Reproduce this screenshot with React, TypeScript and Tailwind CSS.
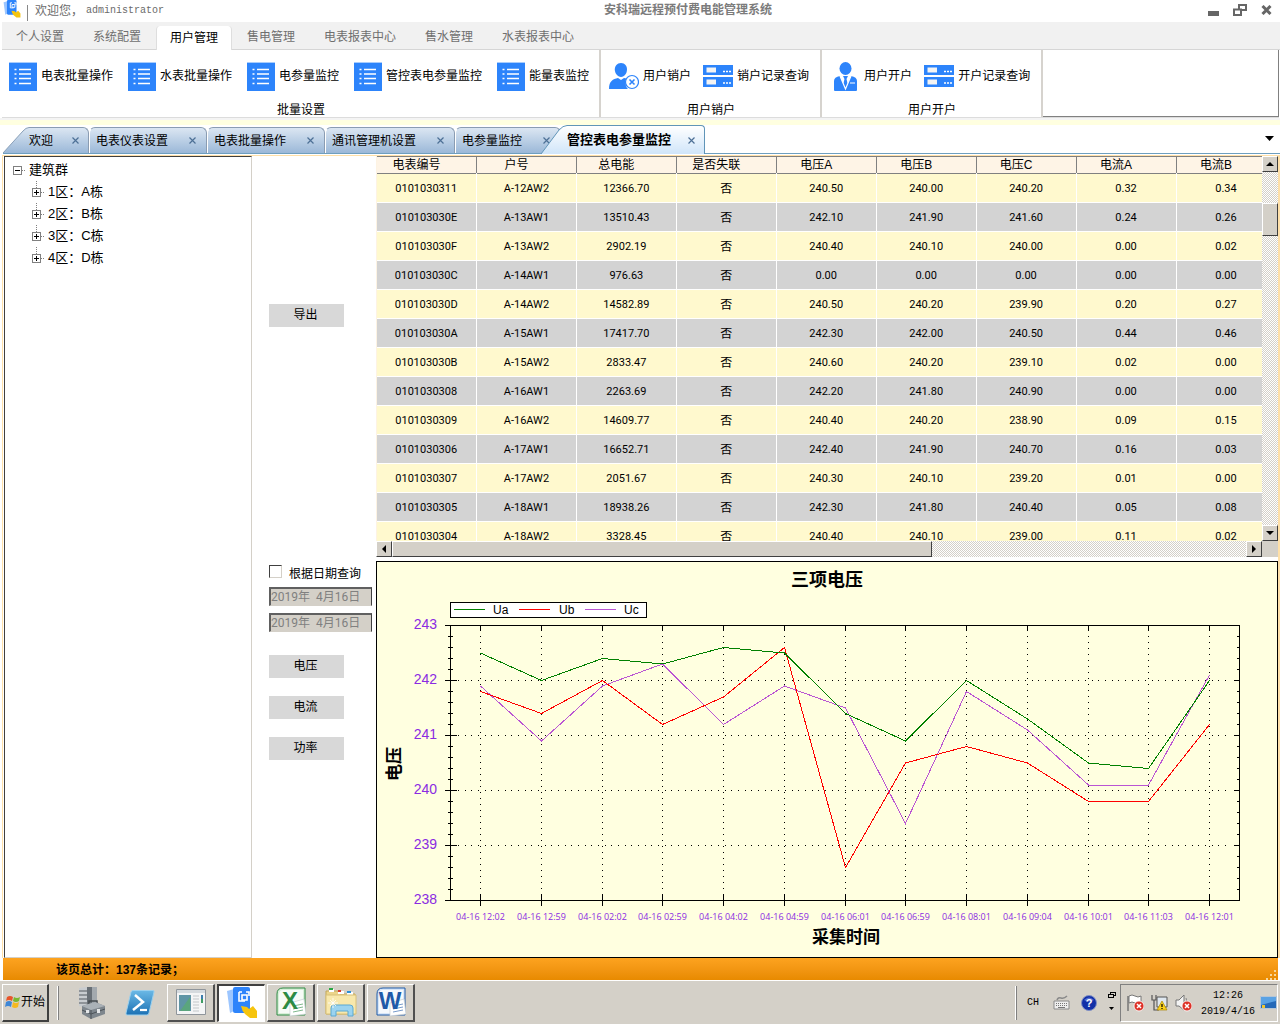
import React from 'react'

const menuTabs = ['个人设置', '系统配置', '用户管理', '售电管理', '电表报表中心', '售水管理', '水表报表中心']
const batchItems = ['电表批量操作', '水表批量操作', '电参量监控', '管控表电参量监控', '能量表监控']
const columns = ['电表编号', '户号', '总电能', '是否失联', '电压A', '电压B', '电压C', '电流A', '电流B']
const rows = [
  ['0101030311', 'A-12AW2', '12366.70', '否', '240.50', '240.00', '240.20', '0.32', '0.34'],
  ['010103030E', 'A-13AW1', '13510.43', '否', '242.10', '241.90', '241.60', '0.24', '0.26'],
  ['010103030F', 'A-13AW2', '2902.19', '否', '240.40', '240.10', '240.00', '0.00', '0.02'],
  ['010103030C', 'A-14AW1', '976.63', '否', '0.00', '0.00', '0.00', '0.00', '0.00'],
  ['010103030D', 'A-14AW2', '14582.89', '否', '240.50', '240.20', '239.90', '0.20', '0.27'],
  ['010103030A', 'A-15AW1', '17417.70', '否', '242.30', '242.00', '240.50', '0.44', '0.46'],
  ['010103030B', 'A-15AW2', '2833.47', '否', '240.60', '240.20', '239.10', '0.02', '0.00'],
  ['0101030308', 'A-16AW1', '2263.69', '否', '242.20', '241.80', '240.90', '0.00', '0.00'],
  ['0101030309', 'A-16AW2', '14609.77', '否', '240.40', '240.20', '238.90', '0.09', '0.15'],
  ['0101030306', 'A-17AW1', '16652.71', '否', '242.40', '241.90', '240.70', '0.16', '0.03'],
  ['0101030307', 'A-17AW2', '2051.67', '否', '240.30', '240.10', '239.20', '0.01', '0.00'],
  ['0101030305', 'A-18AW1', '18938.26', '否', '242.30', '241.80', '240.40', '0.05', '0.08'],
  ['0101030304', 'A-18AW2', '3328.45', '否', '240.40', '240.10', '239.00', '0.11', '0.02'],
]

function AppLogo({ className }: { className?: string }) {
  return (
    <svg viewBox="0 0 32 32" className={className} aria-hidden="true">
      <path d="M1 4l7-2v22l-4 2z" fill="#9cc6ff" />
      <path d="M7 2q0-2 2-2h13q2 0 2 2v22q0 2-2 2H9q-2 0-2-2z" fill="#2d84fb" />
      <path d="M13 5h3M20 5h3v4M13 5v9h6" fill="none" stroke="#fff" strokeWidth="1.600" />
      <path d="M16 8h5v5h-5z" fill="none" stroke="#fff" strokeWidth="1.600" />
      <path d="M15 19l6 1 2 2 4-3 4 5v7h-7l-5-4q-3-3-4-8z" fill="#f6c40e" />
    </svg>
  )
}

function ListIcon() {
  return (
    <svg width="28" height="29" viewBox="0 0 28 29" className="shrink-0" aria-hidden="true">
      <rect width="28" height="29" fill="#2d84fb" />
      <path d="M0 .5h28" stroke="#a9cdfd" />
      <path d="M10 7.500h12M10 12h12M10 16.500h12M10 21.500h12" stroke="#fff" strokeWidth="1.400" />
      <path d="M5.500 7.500h2M5.500 12h2M5.500 16.500h2M5.500 21.500h2" stroke="#fff" strokeWidth="1.600" />
    </svg>
  )
}

function UserRemoveIcon() {
  return (
    <svg width="30" height="28" viewBox="0 0 30 28" className="shrink-0" aria-hidden="true">
      <path d="M12 1c4 0 6 3 6 6.500S15.500 15 12 15 5.800 11 5.800 7.500 8 1 12 1z" fill="#2d84fb" />
      <path d="M0 27c0-8 4-10 9-11l3 2 3-2q3 0 4 2c-3 3-3 6 0 9z" fill="#2d84fb" />
      <circle cx="23" cy="20" r="6.500" fill="#fff" stroke="#2d84fb" strokeWidth="1.200" />
      <path d="M20.500 17.500l5 5M25.500 17.500l-5 5" stroke="#2d84fb" strokeWidth="1.600" />
    </svg>
  )
}

function UserSuitIcon() {
  return (
    <svg width="30" height="29" viewBox="0 0 30 29" className="shrink-0" aria-hidden="true">
      <ellipse cx="15.500" cy="6.500" rx="6" ry="6.500" fill="#2d84fb" />
      <path d="M4 28V19q0-4 6-5l5.500 12L21 14q6 1 6 5v9q0 1-1 1H5q-1 0-1-1z" fill="#2d84fb" />
      <path d="M13 14h5l-1.500 3 1.500 6-2.500 4-2.500-4 1.500-6z" fill="#2d84fb" />
      <path d="M10 14l5.500 13L21 14" fill="none" stroke="#fff" strokeWidth="1.200" />
      <path d="M20 21h5" stroke="#fff" />
    </svg>
  )
}

function ServerIcon() {
  return (
    <svg width="30" height="22" viewBox="0 0 30 22" className="shrink-0" aria-hidden="true">
      <path d="M0 0h30v10H0zM0 12h30v10H0z" fill="#2d84fb" />
      <path d="M3.500 2.500h9.500v5H3.500zM3.500 14.500h9.500v5H3.500z" fill="#f4f4f4" />
      <path d="M20 6.500h2M23 6.500h2M26 6.500h2M20 18h2M23 18h2M26 18h2" stroke="#fff" strokeWidth="1.500" />
    </svg>
  )
}

function RibbonButton({ icon, label }: { icon: React.ReactNode; label: string }) {
  return (
    <button className="flex h-8 items-center gap-1 whitespace-nowrap text-black">
      {icon}
      <span>{label}</span>
    </button>
  )
}

function RibbonGroup({ title, wide, children }: { title: string; wide?: boolean; children: React.ReactNode }) {
  return (
    <section
      className={
        'flex shrink-0 flex-col justify-between border-r-2 border-[#d6d3ce] pt-[10px] ' +
        (wide ? 'pr-2.5 pl-[7px]' : 'pr-[11px] pl-2')
      }
    >
      <div className={'flex ' + (wide ? 'gap-[15px]' : 'gap-3')}>{children}</div>
      <h2 className="pl-1 text-center leading-[14px]">{title}</h2>
    </section>
  )
}

function DocTab({ label, first }: { label: string; first?: boolean }) {
  return (
    <div className="flex h-[26px] shrink-0">
      {first && (
        <svg width="26" height="26" viewBox="0 0 26 26" aria-hidden="true">
          <defs>
            <linearGradient id="slope" x1="0" y1="0" x2="0" y2="1">
              <stop offset="0" stopColor="#dbe6f2" />
              <stop offset="1" stopColor="#9bb8d8" />
            </linearGradient>
          </defs>
          <path d="M0 26L20 4Q23 .5 26 .5V26z" fill="url(#slope)" />
          <path d="M0 26L20 4Q23 .5 26 .5" fill="none" stroke="#8aa0b8" />
        </svg>
      )}
      <div
        className={
          'flex items-center border-t border-r border-[#8a9cb2] bg-gradient-to-b from-[#dbe6f2] to-[#9bb8d8] ' +
          (first ? 'gap-[18px] rounded-tr-md pr-2' : 'gap-5 rounded-t-md border-l border-l-white pr-[9px] pl-1.5')
        }
      >
        <button className="whitespace-nowrap">{label}</button>
        <CloseTab label={label} />
      </div>
    </div>
  )
}

function CloseTab({ label }: { label: string }) {
  return (
    <button aria-label={'关闭 ' + label}>
      <svg width="9" height="9" viewBox="0 0 9 9" aria-hidden="true">
        <path d="M1.500 1.500l6 6M7.500 1.500l-6 6" stroke="#4d7096" strokeWidth="1.200" />
      </svg>
    </button>
  )
}

function TreeToggle({ open }: { open?: boolean }) {
  return (
    <button aria-label={open ? '折叠' : '展开'} className="flex size-[9px] shrink-0 bg-white">
      <svg width="9" height="9" viewBox="0 0 9 9" shapeRendering="crispEdges" aria-hidden="true">
        <path d="M.5.5h8v8h-8z" fill="none" stroke="#808080" />
        <path d={open ? 'M2 4.500h5' : 'M2 4.500h5M4.500 2v5'} stroke="#000" />
      </svg>
    </button>
  )
}

const raised = 'border border-t-white border-l-white border-r-[#404040] border-b-[#404040] bg-[#d4d0c8]'
const track =
  'bg-[repeating-conic-gradient(#d4d0c8_0_25%,#ffffff_0_50%)] bg-[length:2px_2px]'

function Arrow({ d, label }: { d: string; label: string }) {
  return (
    <button aria-label={label} className={'flex size-4 shrink-0 items-center justify-center ' + raised}>
      <svg width="8" height="8" viewBox="0 0 8 8" aria-hidden="true">
        <path d={d} />
      </svg>
    </button>
  )
}

function MeterTable() {
  return (
    <div className="flex min-h-0 grow-[401] basis-0 flex-col">
      <div className="flex min-h-0 flex-1">
        <div className="min-w-0 flex-1 overflow-hidden border-l border-[#fdf3e3]">
          <table className="w-full min-w-[900px] table-fixed border-collapse">
            <thead>
              <tr className="h-[17px] border-y border-[#808080] bg-[#fef4e6]">
                {columns.map((c) => (
                  <th key={c} className="p-0 font-normal leading-[15px]">
                    <div className="border-r border-[#808080] pt-px pr-5">{c}</div>
                  </th>
                ))}
              </tr>
            </thead>
            <tbody className="font-['Roboto','Noto_Sans_CJK_SC',sans-serif] text-[11px]">
              {rows.map((r) => (
                <tr key={r[0]} className="h-[29px] odd:bg-[#fff9ce] even:bg-[#d3d3d3]">
                  {r.map((v, i) => (
                    <td
                      key={i}
                      className={'border-r border-b border-white p-0 pt-0.5 pr-px text-center leading-4 ' + (i === 3 ? 'text-[12px]' : '')}
                    >
                      {v}
                    </td>
                  ))}
                </tr>
              ))}
            </tbody>
          </table>
        </div>
        <div className={'flex w-4 shrink-0 flex-col ' + track}>
          <Arrow d="M0 6h8L4 2z" label="向上滚动" />
          <div className={'mt-[31px] h-[33px] ' + raised} />
          <div className="flex-1" />
          <Arrow d="M0 2h8L4 6z" label="向下滚动" />
        </div>
      </div>
      <div className="flex h-4 shrink-0 bg-[#d4d0c8]">
        <div className={'flex flex-1 ' + track}>
          <Arrow d="M6 0v8L2 4z" label="向左滚动" />
          <div className={'w-[61%] ' + raised} />
          <div className="flex-1" />
          <Arrow d="M2 0v8L6 4z" label="向右滚动" />
        </div>
        <div className="w-4" />
      </div>
    </div>
  )
}

const times = [
  '12:02', '12:59', '02:02', '02:59', '04:02', '04:59', '06:01',
  '06:59', '08:01', '09:04', '10:01', '11:03', '12:01',
]
const series = [
  { name: 'Uc', color: '#ba55d3', values: [241.9, 240.9, 241.9, 242.3, 241.2, 241.9, 241.5, 239.4, 241.8, 241.1, 240.1, 240.1, 242.1] },
  { name: 'Ub', color: '#ff0000', values: [241.8, 241.4, 242, 241.2, 241.7, 242.6, 238.6, 240.5, 240.8, 240.5, 239.8, 239.8, 241.2] },
  { name: 'Ua', color: '#008000', values: [242.5, 242, 242.4, 242.3, 242.6, 242.5, 241.4, 240.9, 242, 241.3, 240.5, 240.4, 242] },
]
const px = (i: number) => Math.round(480 + i * 60.75) + 0.5
const py = (v: number) => 900.5 - (v - 238) * 55

function VoltageChart() {
  const minor = Array.from({ length: 24 }, (_, i) => 900.5 - (i + 1) * 11)
  return (
    <figure className="flex min-h-0 grow-[395] basis-0 border border-black bg-[#ffffe0]">
      <svg viewBox="377 562 900 395" className="h-full w-full font-['Liberation_Sans','Noto_Sans_CJK_SC',sans-serif]" role="img" aria-label="三项电压">
        <text x="827" y="586" textAnchor="middle" fontSize="18" fontWeight="bold">三项电压</text>
        <g shapeRendering="crispEdges" fill="none" stroke="#000">
          <path d="M450.5 602.5h196v15h-196z" fill="#fff" />
          <path d="M454 609.5h31" stroke="#008000" />
          <path d="M519 609.5h31" stroke="#ff0000" />
          <path d="M585 609.5h31" stroke="#ba55d3" />
          <path d="M450.5 625.5h789v275h-789z" />
          {[239, 240, 241, 242].map((v) => (
            <path key={v} d={`M458 ${py(v)}H1232`} strokeDasharray="1 5.670" />
          ))}
          {times.map((_, i) => (
            <g key={i}>
              <path d={`M${px(i)} 636V895`} strokeDasharray="1 5" />
              <path d={`M${px(i)} 625v6M${px(i)} 894v12`} />
            </g>
          ))}
          {[238, 239, 240, 241, 242, 243].map((v) => (
            <path key={v} d={`M445 ${py(v)}h12M1234 ${py(v)}h6`} />
          ))}
          {minor.map((y) => (
            <path key={y} d={`M448 ${y}h5M1237 ${y}h3`} />
          ))}
          {series.map((s) => (
            <polyline key={s.name} stroke={s.color} points={s.values.map((v, i) => `${px(i)},${py(v)}`).join(' ')} />
          ))}
        </g>
        <g fontSize="12">
          <text x="493" y="614">Ua</text>
          <text x="559" y="614">Ub</text>
          <text x="624" y="614">Uc</text>
        </g>
        <g fontSize="14" fill="#8a2be2" textAnchor="end">
          {[238, 239, 240, 241, 242, 243].map((v) => (
            <text key={v} x="437" y={Math.round(py(v)) + 3}>{v}</text>
          ))}
        </g>
        <g fontSize="9" fill="#8a2be2" textAnchor="middle" className="font-['Open_Sans',sans-serif]">
          {times.map((t, i) => (
            <text key={i} x={px(i)} y="920">{'04-16 ' + t}</text>
          ))}
        </g>
        <text x="846" y="943" textAnchor="middle" fontSize="17" fontWeight="bold">采集时间</text>
        <text transform="translate(400 764) rotate(-90)" textAnchor="middle" fontSize="17" fontWeight="bold">电压</text>
      </svg>
    </figure>
  )
}

function DateField({ label }: { label: string }) {
  return (
    <div className="flex h-[19px] border border-t-2 border-l-2 border-t-[#606060] border-l-[#606060] border-r-[#404040] border-b-[#d4d0c8]">
      <input
        aria-label={label}
        disabled
        defaultValue="2019年  4月16日"
        className="w-full bg-[#d4d0c8] font-['Roboto','Noto_Sans_CJK_SC',sans-serif] text-[12px] text-[#808080]"
      />
    </div>
  )
}

function GrayButton({ children, className }: { children: string; className?: string }) {
  return <button className={'block h-[23px] w-[75px] bg-[#d8d8d8] pr-0.5 pb-0.5 ' + (className ?? '')}>{children}</button>
}

function TaskButton({ label, active, children }: { label: string; active?: boolean; children: React.ReactNode }) {
  return (
    <button
      aria-label={label}
      className={
        'flex h-[38px] w-[48px] items-center justify-center border ' +
        (active
          ? 'border-t-2 border-l-2 border-t-[#404040] border-l-[#404040] border-r-white border-b-white bg-white'
          : 'border-r-2 border-b-2 border-t-white border-l-white border-r-[#505050] border-b-[#505050]')
      }
    >
      {children}
    </button>
  )
}

function ServerManagerIcon() {
  return (
    <svg width="30" height="32" viewBox="0 0 30 32" aria-hidden="true">
      <path d="M2 1l8-1v21l-8-2z" fill="#c8ccd0" />
      <path d="M2 4h8M2 8h8M2 12h8M2 16h8" stroke="#555b60" />
      <path d="M10 0h10v22H10z" fill="#697077" />
      <path d="M15 0h5v22h-5z" fill="#a3a9ae" />
      <path d="M12 17v-3h8v3" fill="none" stroke="#454b50" strokeWidth="1.500" />
      <path d="M5 19l13-4 10 4v8l-14 5-9-5z" fill="#7e868d" />
      <path d="M5 19l13-4 10 4-14 4z" fill="#aab1b7" />
      <path d="M14 23v9M5 23l9 4 14-5" stroke="#4c5359" fill="none" />
      <path d="M9 23h3v3H9zM20 22h3v4h-3z" fill="#e5e7e9" />
    </svg>
  )
}

function PowerShellIcon() {
  return (
    <svg width="30" height="26" viewBox="0 0 30 26" aria-hidden="true">
      <defs>
        <linearGradient id="ps" x1="0" y1="0" x2="0" y2="1">
          <stop offset="0" stopColor="#6bb9e6" />
          <stop offset="1" stopColor="#1c71b4" />
        </linearGradient>
      </defs>
      <path d="M6 2q.5-1.500 2-1.500h20q1.500 0 1 1.500l-5 21q-.5 2-2 2H2q-1.500 0-1-2z" fill="url(#ps)" stroke="#9bd0ee" />
      <path d="M10 5l8 7-10 8" fill="none" stroke="#fff" strokeWidth="2.500" />
      <path d="M15 20h7" stroke="#fff" strokeWidth="2.200" />
    </svg>
  )
}

function WindowIcon() {
  return (
    <svg width="30" height="26" viewBox="0 0 30 26" aria-hidden="true">
      <path d="M.5.5h29v25H.5z" fill="#f4f5f6" stroke="#8f959b" />
      <path d="M1 1h28v3H1z" fill="#d5dade" />
      <path d="M3 6h12v16H3z" fill="#5f95a5" />
      <path d="M4 22L14 8v14z" fill="#5aa57d" />
      <path d="M17 7h6M17 10h6M17 13h6M17 16h6M17 19h6M17 22h6" stroke="#c3c7ca" />
      <path d="M25 6h2v8h-2z" fill="#3c7dab" />
      <path d="M25 10h2v4h-2z" fill="#3e9c63" />
    </svg>
  )
}

function OfficeIcon({ letter, color, light }: { letter: string; color: string; light: string }) {
  return (
    <svg width="30" height="30" viewBox="0 0 30 30" aria-hidden="true">
      <path d="M7 1h22v27H1V7q0-6 6-6z" fill={light} stroke={color} />
      <path d="M7 3h20v23H3V8q0-5 4-5z" fill="#fff" opacity=".75" />
      <path d="M14 16l14-4 2 15-16 2z" fill="#fff" stroke="#c8d0d4" strokeWidth=".7" />
      <path d="M17 19l10-2M17 22l10-2M17 25l10-2" stroke={color} opacity=".6" />
      <text x="14" y="22" textAnchor="middle" fontSize="24" fontWeight="bold" fill={color} className="font-['Liberation_Sans',sans-serif]">
        {letter}
      </text>
    </svg>
  )
}

function FolderIcon() {
  return (
    <svg width="32" height="30" viewBox="0 0 32 30" aria-hidden="true">
      <path d="M1 4h12l2 3h15v20H1z" fill="#ecd58a" stroke="#c2a75b" />
      <path d="M4 2h5v3H4zM13 4h6v3h-6zM22 5h6v3h-6z" fill="#fff" />
      <path d="M4 1h4v2H4z" fill="#28a745" />
      <path d="M13 3h3v2h-3z" fill="#d83b2d" />
      <path d="M22 4h4v2h-4z" fill="#2b8fd6" />
      <path d="M1 8h30v19H1z" fill="#f8e8ac" stroke="#d8c078" />
      <path d="M6 29V21q0-3 3-3h16q3 0 3 3v8h-5v-5H11v5z" fill="#9bd3ef" stroke="#5ba9d3" />
      <path d="M8 11v10M3 16h10M5 13l6 6M11 13l-6 6" stroke="#fff" strokeWidth=".8" />
    </svg>
  )
}

function ErrorBadge() {
  return (
    <g>
      <circle cx="12" cy="12" r="5" fill="#dd3127" stroke="#fff" strokeWidth=".8" />
      <path d="M10 10l4 4M14 10l-4 4" stroke="#fff" strokeWidth="1.500" />
    </g>
  )
}

function Taskbar() {
  return (
    <footer className="flex h-11 shrink-0 items-center border-t border-white bg-[#d4d0c8] pl-0.5">
      <button className={'flex h-[38px] w-[47px] shrink-0 items-center border-r-2 border-b-2 pl-0.5 ' + raised}>
        <svg width="16" height="16" viewBox="0 0 16 16" aria-hidden="true">
          <path d="M2 3q3-2 6 0L7 7Q4 5 1 7z" fill="#e8542a" />
          <path d="M9 3q3 2 6 0l-1 4q-3 2-6 0z" fill="#7ab82f" />
          <path d="M1 8q3-2 6 0l-1 5q-3-2-6 0z" fill="#3f87d6" />
          <path d="M8 8q3 2 6 0l-1 5q-3 2-6 0z" fill="#f5b921" />
        </svg>
        <span className="whitespace-nowrap">开始</span>
      </button>
      <div className="ml-2 h-[34px] w-[2px] shrink-0 border-l border-white bg-[#808080]" />
      <button aria-label="服务器管理器" className="ml-[18px]"><ServerManagerIcon /></button>
      <button aria-label="PowerShell" className="ml-[18px]"><PowerShellIcon /></button>
      <div className="ml-3 flex gap-0.5">
        <TaskButton label="窗口"><WindowIcon /></TaskButton>
        <TaskButton label="电能管理系统" active><AppLogo className="h-8 w-8" /></TaskButton>
        <TaskButton label="Excel"><OfficeIcon letter="X" color="#2c8a43" light="#d9efd9" /></TaskButton>
        <TaskButton label="文件夹"><FolderIcon /></TaskButton>
        <TaskButton label="Word"><OfficeIcon letter="W" color="#1f5aa8" light="#d7e6f8" /></TaskButton>
      </div>
      <div className="flex-1" />
      <div className="h-[34px] w-[2px] shrink-0 border-r border-[#808080] bg-white" />
      <span className="ml-2.5 font-['Liberation_Mono',monospace] text-[10px]">CH</span>
      <svg width="17" height="16" viewBox="0 0 17 16" className="ml-3.5" aria-hidden="true">
        <path d="M4 5q1-3 4-2t6-2" fill="none" stroke="#8a8a8a" strokeWidth="1.500" />
        <path d="M1 6h15v8H1z" fill="#eee" stroke="#8a8a8a" />
        <path d="M3 8.500h11M3 10.500h11" stroke="#777" strokeDasharray="1 1" />
        <path d="M5 12.500h7" stroke="#777" />
      </svg>
      <svg width="16" height="16" viewBox="0 0 16 16" className="ml-[11px]" aria-hidden="true">
        <circle cx="8" cy="8" r="7.500" fill="#1230a8" stroke="#7f8fc4" />
        <path d="M3 5q5-5 10 0-5 3-10 0z" fill="#6d86e0" opacity=".7" />
        <text x="8" y="12" textAnchor="middle" fontSize="11" fontWeight="bold" fill="#fff" className="font-['Liberation_Sans',sans-serif]">?</text>
      </svg>
      <div className="ml-[11px] flex flex-col items-center gap-2 pb-1">
        <svg width="8" height="7" viewBox="0 0 8 7" shapeRendering="crispEdges" aria-hidden="true">
          <path d="M2.500 3V.5h5v3H6M.5 2.500h5v3h-5z" fill="none" stroke="#000" />
        </svg>
        <svg width="5" height="3" viewBox="0 0 5 3" aria-hidden="true"><path d="M0 0h5L2.500 3z" /></svg>
      </div>
      <div className="mr-0.5 ml-1 flex h-[38px] items-center border border-t-[#808080] border-l-[#808080] border-r-white border-b-white pl-1.5">
        <svg width="17" height="18" viewBox="0 0 17 18" aria-hidden="true">
          <path d="M1 2v15" stroke="#777" strokeWidth="1.500" />
          <path d="M2 2q3-2 6 0t6 0v7q-3 2-6 0T2 9z" fill="#fff" stroke="#777" />
          <ErrorBadge />
        </svg>
        <svg width="17" height="18" viewBox="0 0 17 18" className="ml-[7px]" aria-hidden="true">
          <path d="M6 3h10v10H6z" fill="#dfe7ef" stroke="#555" />
          <path d="M1 1v5h4V1M3 6v10h5" fill="none" stroke="#555" strokeWidth="1.200" />
          <path d="M11 7l5 9H6z" fill="#fbd21d" stroke="#a98500" strokeWidth=".7" />
          <path d="M11 10v3M11 14v1" stroke="#000" strokeWidth="1.200" />
        </svg>
        <svg width="17" height="18" viewBox="0 0 17 18" className="ml-[7px]" aria-hidden="true">
          <path d="M1 6h3l5-5v15l-5-4H1z" fill="#f3f3f3" stroke="#777" />
          <path d="M11 4q2 4 0 8" fill="none" stroke="#888" />
          <ErrorBadge />
        </svg>
        <div className="ml-[9px] pt-0.5 text-center font-['Liberation_Mono',monospace] text-[10px] leading-4">
          <div>12:26</div>
          <div>2019/4/16</div>
        </div>
        <svg width="17" height="14" viewBox="0 0 17 14" className="ml-[5px]" aria-hidden="true">
          <path d="M.5.5h16v12H.5z" fill="#2569b8" stroke="#b6c6d6" />
          <path d="M1 1h15v4L1 9z" fill="#5aa2e4" />
          <path d="M2 9h3v3H2z" fill="#f0c531" />
        </svg>
      </div>
    </footer>
  )
}

export default function App() {
  return (
    <div className="flex h-screen min-h-[700px] min-w-[1100px] flex-col overflow-hidden bg-white font-['Liberation_Sans','Noto_Sans_CJK_SC',sans-serif] text-[12px] leading-4 text-black">
      <header className="flex h-[22px] shrink-0 items-start pr-2 pl-[3px] text-[#6b6b6b]">
        <AppLogo className="h-[18px] w-[18px]" />
        <div className="mt-[5px] ml-1.5 h-[16px] border-l border-[#888]" />
        <div className="mt-[3px] ml-[7px] flex">
          欢迎您，
          <span className="ml-[3px] font-['Liberation_Mono',monospace] text-[10px]">administrator</span>
        </div>
        <h1 className="mt-0.5 flex-1 pl-1 text-center font-bold text-[#7b7b7b]">安科瑞远程预付费电能管理系统</h1>
        <div className="mt-1 flex items-center gap-3.5">
          <button aria-label="最小化" className="pt-1.5">
            <svg width="11" height="5" viewBox="0 0 11 5"><path d="M0 0h11v5H0z" fill="#666" /></svg>
          </button>
          <button aria-label="还原">
            <svg width="14" height="12" viewBox="0 0 14 12">
              <path d="M6 1h7v5H6z" fill="none" stroke="#666" strokeWidth="2" />
              <path d="M1 5.500h7V11H1z" fill="#fff" stroke="#666" strokeWidth="2" />
            </svg>
          </button>
          <button aria-label="关闭">
            <svg width="11" height="10" viewBox="0 0 11 10"><path d="M1.500 1l8 8M9.500 1l-8 8" stroke="#666" strokeWidth="3" /></svg>
          </button>
        </div>
      </header>

      <nav className="ml-0.5 flex h-7 shrink-0 items-end gap-px border-b border-[#d6d6d6] bg-[#f1f1f1]">
        {menuTabs.map((t, i) => (
          <button
            key={t}
            className={
              'h-6 pb-px whitespace-nowrap ' +
              (i === 2 ? '-mb-px rounded-t border-x border-[#dedede] bg-white px-[13px]' : 'px-3.5 text-[#6f6f6f]')
            }
          >
            {t}
          </button>
        ))}
      </nav>

      <div className="mr-px ml-0.5 flex h-[68px] shrink-0 border-b border-[#dcdcdc]">
        <RibbonGroup title="批量设置" wide>
          {batchItems.map((b) => (
            <RibbonButton key={b} icon={<ListIcon />} label={b} />
          ))}
        </RibbonGroup>
        <RibbonGroup title="用户销户">
          <RibbonButton icon={<UserRemoveIcon />} label="用户销户" />
          <RibbonButton icon={<ServerIcon />} label="销户记录查询" />
        </RibbonGroup>
        <RibbonGroup title="用户开户">
          <RibbonButton icon={<UserSuitIcon />} label="用户开户" />
          <RibbonButton icon={<ServerIcon />} label="开户记录查询" />
        </RibbonGroup>
        <div className="flex-1 border-r border-b border-[#808080]" />
      </div>
      <div className="h-[7px] shrink-0 border-t-2 border-[#f4f4f4] bg-[#ffffe0]" />

      <div className="ml-[3px] flex h-[29px] shrink-0 items-end border-b border-[#6f9fbe]">
        <DocTab label="欢迎" first />
        <DocTab label="电表仪表设置" />
        <DocTab label="电表批量操作" />
        <DocTab label="通讯管理机设置" />
        <DocTab label="电参量监控" />
        <div className="relative -mb-px -ml-[20px] flex h-[29px]">
          <svg width="26" height="29" viewBox="0 0 26 29" aria-hidden="true">
            <defs>
              <linearGradient id="activeSlope" x1="0" y1="0" x2="0" y2="1">
                <stop offset="0" stopColor="#ffffff" />
                <stop offset="1" stopColor="#d0e5f9" />
              </linearGradient>
            </defs>
            <path d="M0 29L18 5Q22 .5 26 .5V29z" fill="url(#activeSlope)" />
            <path d="M0 29L18 5Q22 .5 26 .5" fill="none" stroke="#6095b8" />
          </svg>
          <div className="flex items-center gap-4 rounded-tr border-t border-r border-[#6095b8] bg-gradient-to-b from-white to-[#d0e5f9] pr-2">
            <button className="text-[13px] font-bold whitespace-nowrap">管控表电参量监控</button>
            <CloseTab label="管控表电参量监控" />
          </div>
        </div>
        <button aria-label="标签列表" className="mr-1.5 mb-3 ml-auto">
          <svg width="9" height="5" viewBox="0 0 9 5"><path d="M0 0h9L4.500 5z" /></svg>
        </button>
      </div>

      <main className="mt-px ml-[2px] flex min-h-0 flex-1 border-t border-r-2 border-l border-[#ffe0a8]">
        <aside className="ml-px w-[248px] shrink-0 border border-t-[#404040] border-l-[#404040] border-r-[#d4d0c8] border-b-[#d4d0c8] pt-0.5 text-[13px]">
          <ul className="leading-[22px]">
            <li>
              <div className="flex items-center pl-2">
                <TreeToggle open />
                <span className="mr-1 w-[3px] border-t border-dotted border-[#808080]" />
                建筑群
              </div>
              <ul className="ml-[27px]">
                {['1区：A栋', '2区：B栋', '3区：C栋', '4区：D栋'].map((n) => (
                  <li key={n} className="flex h-[22px] items-center">
                    <div className="flex flex-col items-center">
                      <span className="h-[7px] border-l border-dotted border-[#808080]" />
                      <TreeToggle />
                      <span className="h-[6px] border-l border-dotted border-transparent" />
                    </div>
                    <span className="mr-1 w-[3px] border-t border-dotted border-[#808080]" />
                    {n}
                  </li>
                ))}
              </ul>
            </li>
          </ul>
        </aside>

        <section className="w-[124px] shrink-0 pl-[17px]">
          <GrayButton className="mt-[148px]">导出</GrayButton>
          <label className="mt-[238px] flex items-center gap-[7px] whitespace-nowrap">
            <input
              type="checkbox"
              className="mb-1 size-[13px] appearance-none border border-t-[#404040] border-l-[#404040] border-r-[#d4d0c8] border-b-[#d4d0c8] bg-white checked:bg-[#404040]"
            />
            根据日期查询
          </label>
          <div className="mt-[5px] mr-1 flex flex-col gap-[7px]">
            <DateField label="开始日期" />
            <DateField label="结束日期" />
          </div>
          <div className="mt-[23px] flex flex-col gap-[18px]">
            <GrayButton>电压</GrayButton>
            <GrayButton>电流</GrayButton>
            <GrayButton>功率</GrayButton>
          </div>
        </section>

        <section className="flex min-w-0 flex-1 flex-col gap-1">
          <MeterTable />
          <VoltageChart />
        </section>
      </main>

      <div className="mr-0.5 ml-[3px] flex h-[22px] shrink-0 items-center justify-between bg-gradient-to-b from-[#fda31f] to-[#e88a00] pl-[53px] font-bold">
        <span className="pt-0.5">该页总计：137条记录；</span>
        <svg width="12" height="12" viewBox="0 0 12 12" className="self-end" aria-hidden="true">
          <path d="M8 2h2v2H8zM4 6h2v2H4zM8 6h2v2H8zM0 10h2v2H0zM4 10h2v2H4zM8 10h2v2H8z" fill="#f8d79b" />
        </svg>
      </div>
      <Taskbar />
    </div>
  )
}
